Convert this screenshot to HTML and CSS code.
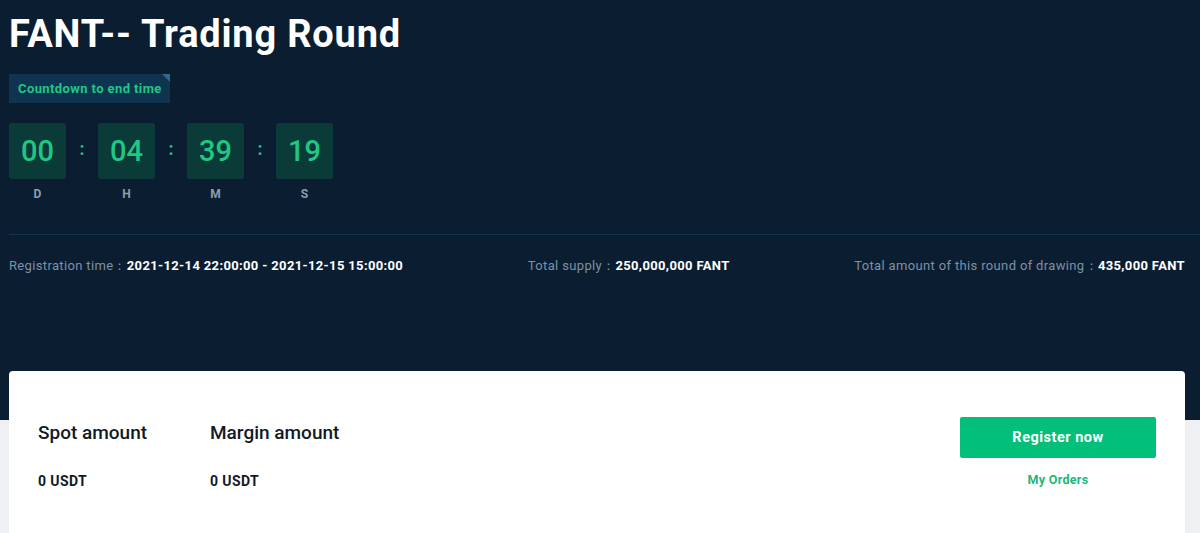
FILE: index.html
```html
<!DOCTYPE html>
<html>
<head>
<meta charset="utf-8">
<link rel="stylesheet" href="styles.css">
</head>
<body>
<div class="hero">
  <div class="wrap">
    <h1 class="title">FANT-- Trading Round</h1>
    <div class="tag">Countdown to end time</div>
    <div class="timer">
      <div class="unit"><div class="box">00</div><div class="lbl">D</div></div>
      <div class="colon">:</div>
      <div class="unit"><div class="box">04</div><div class="lbl">H</div></div>
      <div class="colon">:</div>
      <div class="unit"><div class="box">39</div><div class="lbl">M</div></div>
      <div class="colon">:</div>
      <div class="unit"><div class="box">19</div><div class="lbl">S</div></div>
    </div>
    <div class="divider"></div>
    <div class="info">
      <div class="item"><span class="k">Registration time：</span><span class="v">2021-12-14 22:00:00 - 2021-12-15 15:00:00</span></div>
      <div class="item"><span class="k">Total supply：</span><span class="v">250,000,000 FANT</span></div>
      <div class="item"><span class="k">Total amount of this round of drawing：</span><span class="v">435,000 FANT</span></div>
    </div>
  </div>
</div>
<div class="lower">
  <div class="card">
    <div class="amounts">
      <div class="amt amt-spot"><div class="amt-t">Spot amount</div><div class="amt-v">0 USDT</div></div>
      <div class="amt"><div class="amt-t">Margin amount</div><div class="amt-v">0 USDT</div></div>
    </div>
    <div class="actions">
      <button class="btn">Register now</button>
      <a class="orders">My Orders</a>
    </div>
  </div>
</div>
</body>
</html>
```
FILE: styles.css
```css
* { box-sizing: border-box; }
html, body { margin: 0; padding: 0; }
body {
  background: #eef0f4;
  font-family: Roboto, "Liberation Sans", sans-serif;
  width: 1200px;
  height: 533px;
  overflow: hidden;
}
.hero {
  background: #0b1e31;
  height: 420px;
}
.wrap {
  padding: 0 15px 0 9px;
}
.title {
  margin: 0;
  padding-top: 12px;
  font-size: 38px;
  line-height: 44px;
  font-weight: 700;
  color: #ffffff;
  letter-spacing: 0.8px;
}
.tag {
  position: relative;
  margin-top: 18px;
  width: 161px;
  height: 29px;
  line-height: 29px;
  background: #0f3450;
  color: #1fc784;
  font-size: 13px;
  font-weight: 700;
  letter-spacing: 0.4px;
  padding-left: 9px;
}
.tag::after {
  content: "";
  position: absolute;
  top: 0;
  right: 0;
  border-top: 8px solid #2f6a8e;
  border-left: 8px solid transparent;
}
.timer {
  display: flex;
  margin-top: 20px;
}
.unit {
  display: flex;
  flex-direction: column;
  align-items: center;
  width: 57px;
}
.box {
  width: 57px;
  height: 56px;
  background: #0a3b38;
  border-radius: 3px;
  color: #1fc784;
  font-size: 29px;
  font-weight: 500;
  display: flex;
  align-items: center;
  justify-content: center;
}
.lbl {
  margin-top: 8px;
  font-size: 12px;
  font-weight: 700;
  color: #8a9db2;
  line-height: 14px;
}
.colon {
  width: 32px;
  text-align: center;
  color: #1fc784;
  font-size: 18px;
  font-weight: 700;
  line-height: 52px;
}
.divider {
  margin-top: 33px;
  height: 1px;
  background: #143449;
  margin-right: -15px;
}
.info {
  display: flex;
  justify-content: space-between;
  margin-top: 23px;
  font-size: 13px;
  letter-spacing: 0.35px;
  line-height: 16px;
}
.k { color: #7d90a6; }
.v { color: #ffffff; font-weight: 700; }
.lower {
  padding: 0 15px 0 9px;
  margin-top: -49px;
}
.card {
  background: #ffffff;
  border-radius: 4px 4px 0 0;
  height: 180px;
  display: flex;
  justify-content: space-between;
  padding: 46px 29px 0 29px;
}
.amounts { display: flex; padding-top: 4px; }
.amt-spot { width: 172px; }
.amt-t {
  font-size: 19px;
  font-weight: 500;
  color: #111a24;
  line-height: 24px;
}
.amt-v {
  margin-top: 27px;
  font-size: 14px;
  font-weight: 700;
  color: #111a24;
  line-height: 18px;
  letter-spacing: 0.4px;
}
.actions {
  display: flex;
  flex-direction: column;
  align-items: center;
  width: 196px;
}
.btn {
  width: 196px;
  height: 41px;
  border: 0;
  border-radius: 2px;
  background: #02c07a;
  color: #ffffff;
  font-family: inherit;
  font-size: 14.5px;
  font-weight: 700;
  letter-spacing: 0.5px;
}
.orders {
  margin-top: 14px;
  font-size: 12.5px;
  font-weight: 700;
  color: #1ab87a;
  line-height: 16px;
  letter-spacing: 0.3px;
}
```
